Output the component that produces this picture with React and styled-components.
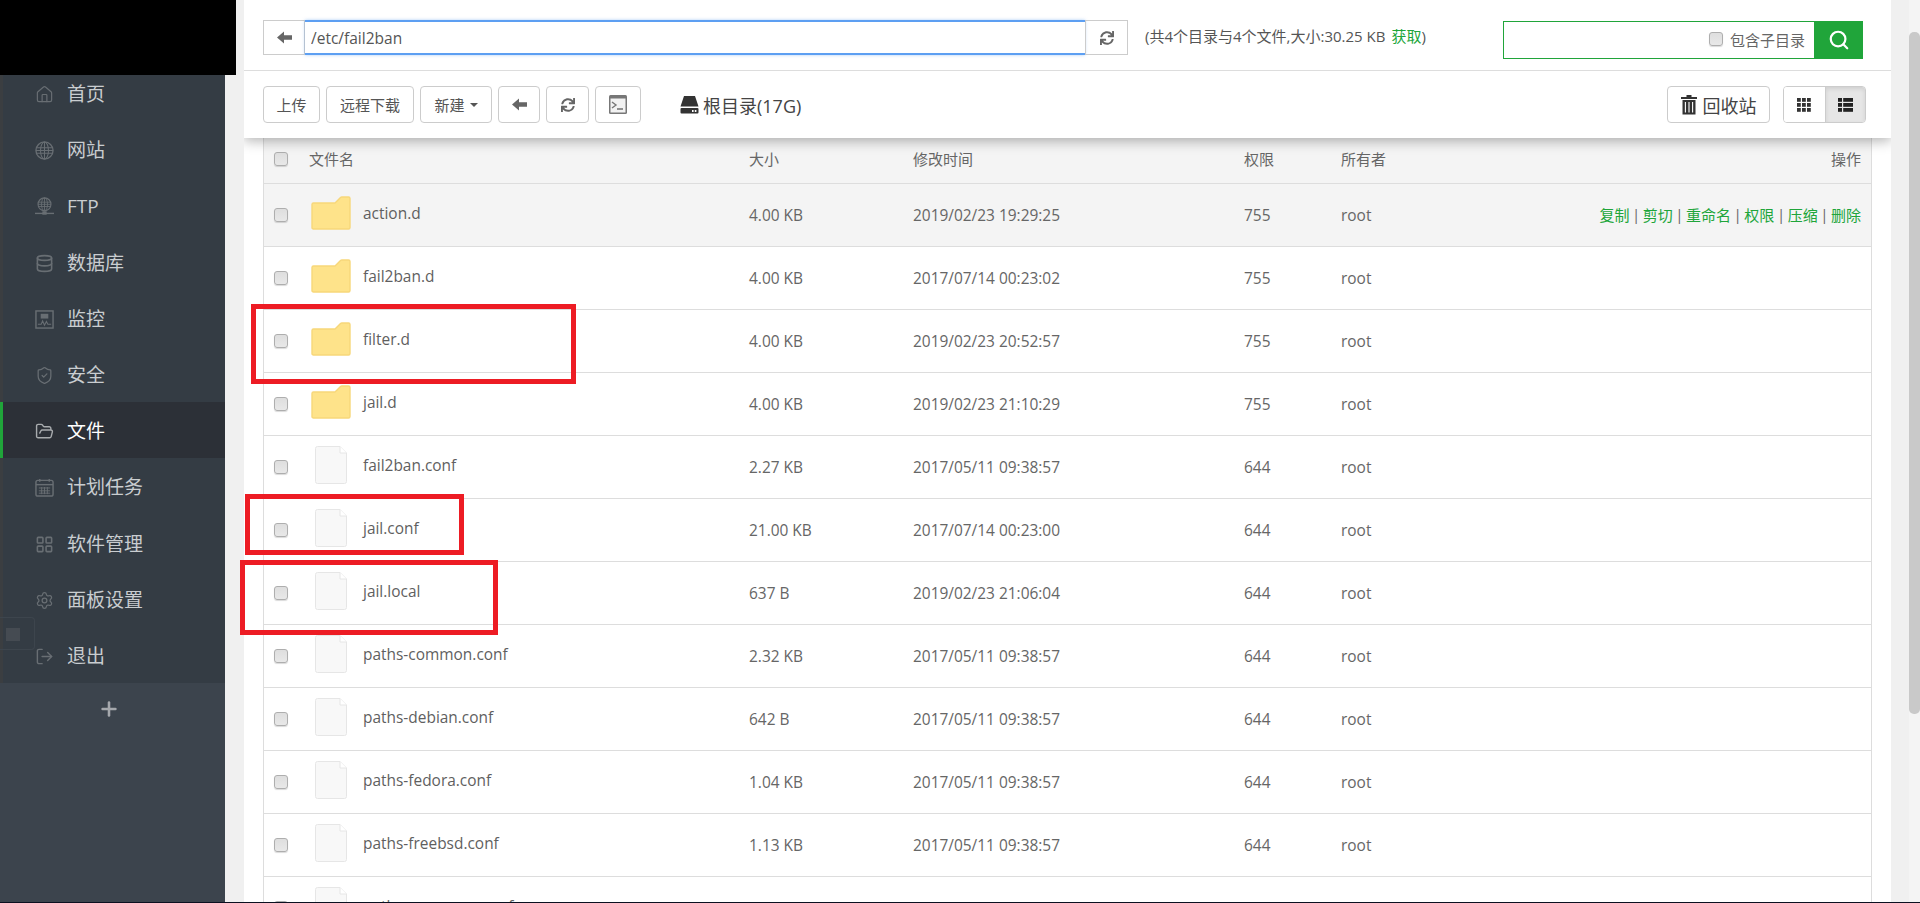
import React from 'react';
import styled, { createGlobalStyle } from 'styled-components';
import { FaSync } from 'react-icons/fa';
import {
  House,
  Database,
  ShieldCheck,
  FolderOpen,
  LayoutGrid,
  Settings,
  LogOut,
  Search,
  Plus,
} from 'lucide-react';

const GlobalStyle = createGlobalStyle`
  html, body {
    margin: 0;
    padding: 0;
    height: 100%;
    overflow: hidden;
    background: #f0f0f0;
  }
  * {
    box-sizing: border-box;
  }
  body {
    font-family: "Open Sans", "Noto Sans CJK SC", sans-serif;
    color: #666;
  }
`;

const Page = styled.div`
  display: flex;
  flex-direction: column;
  height: 100vh;
  overflow: hidden;
`;

const Body = styled.div`
  position: relative;
  display: flex;
  flex: 1;
  min-height: 0;
`;

const BottomLine = styled.div`
  height: 1px;
  background: #0b1020;
`;

const LogoMask = styled.div`
  position: absolute;
  left: 0;
  top: 0;
  width: 236px;
  height: 75px;
  background: #000;
  z-index: 5;
`;

const Sidebar = styled.aside`
  position: relative;
  width: 225px;
  flex: none;
  padding-top: 65px;
  background: #3c444d;
`;

const Menu = styled.nav`
  background: #343c44;
`;

const MenuItem = styled.div`
  display: flex;
  align-items: center;
  gap: 13px;
  height: 56.2px;
  padding-left: 32px;
  padding-top: 3px;
  border-left: 3px solid ${(p) => (p.$active ? '#20a53a' : '#3b3e41')};
  background: ${(p) => (p.$active ? '#2c3037' : 'transparent')};
  color: ${(p) => (p.$active ? '#fff' : '#c9cdd0')};
  font-size: 19px;
  line-height: 1;

  svg {
    flex: none;
    width: 19px;
    height: 19px;
    color: ${(p) => (p.$active ? '#a8abae' : '#686e73')};
  }
`;

const AddMenu = styled.div`
  display: flex;
  justify-content: center;
  margin-top: 15px;
  padding-right: 7px;
  color: #a5a8ac;

  svg {
    width: 22px;
    height: 22px;
  }
`;

const GhostHandle = styled.div`
  position: absolute;
  left: 0;
  top: 617px;
  width: 35px;
  height: 33px;
  border: 1px solid #3d454d;
  border-left: 0;
  border-radius: 0 4px 4px 0;

  &::after {
    content: '';
    position: absolute;
    left: 6px;
    top: 10px;
    width: 14px;
    height: 13px;
    background: #454b52;
  }
`;

const Main = styled.main`
  display: flex;
  flex: 1;
  min-width: 0;
  padding-left: 19px;
`;

const Content = styled.div`
  display: flex;
  flex-direction: column;
  width: 1647px;
  flex: none;
  background: #fff;
  overflow: hidden;
`;

const ScrollTrack = styled.div`
  margin-left: auto;
  width: 11px;
  flex: none;
  padding-top: 32px;
  background: #f4f4f4;
`;

const ScrollThumb = styled.div`
  height: 682px;
  background: #c9c9c9;
  border-radius: 5px;
`;

const Toolbar = styled.div`
  position: relative;
  z-index: 2;
  flex: none;
  background: #fff;
  box-shadow: 0 3px 12px rgba(0, 0, 0, 0.3);
`;

const PathRow = styled.div`
  display: flex;
  align-items: flex-start;
  height: 71px;
  padding: 20px 28px 0 19px;
  border-bottom: 1px solid #ddd;
`;

const PathButton = styled.div`
  display: flex;
  align-items: center;
  justify-content: center;
  flex: none;
  width: ${(p) => p.$width}px;
  height: 35px;
  border: 1px solid #ccc;
  color: #666;
`;

const PathInput = styled.input`
  flex: none;
  width: 780px;
  height: 35px;
  padding: 0 6px;
  border: 0;
  border-top: 2px solid #5d9ff2;
  border-bottom: 2px solid #5d9ff2;
  outline: none;
  font: 15.5px "Open Sans", "Noto Sans CJK SC", sans-serif;
  color: #555;
  box-shadow: 0 0 3px rgba(93, 159, 242, 0.5);
`;

const PathInfo = styled.div`
  margin-left: 17px;
  height: 35px;
  line-height: 33px;
  font-size: 15px;
  color: #555;
  white-space: nowrap;
`;

const GreenText = styled.span`
  margin-left: 6px;
  color: #20a53a;
`;

const SearchBox = styled.div`
  display: flex;
  align-items: center;
  justify-content: flex-end;
  width: 360px;
  height: 38px;
  margin-left: auto;
  margin-top: 1px;
  border: 1px solid #20a53a;
  font-size: 15px;
  color: #666;
`;

const SearchLabel = styled.label`
  display: flex;
  align-items: center;
  gap: 7px;
  margin-right: 9px;
  padding-bottom: 2px;
`;

const SearchButton = styled.div`
  display: flex;
  align-items: center;
  justify-content: center;
  width: 49px;
  height: 38px;
  margin-right: -1px;
  background: #20a53a;
  color: #fff;
`;

const ActionRow = styled.div`
  display: flex;
  align-items: flex-start;
  gap: 6px;
  height: 67px;
  padding: 15px 25px 0 19px;
`;

const ToolButton = styled.div`
  display: flex;
  align-items: center;
  justify-content: center;
  flex: none;
  gap: 5px;
  min-width: ${(p) => p.$width || 0}px;
  height: 37px;
  padding: 0 ${(p) => (p.$width ? 0 : 12.5)}px;
  border: 1px solid #ccc;
  border-radius: 4px;
  background: #fff;
  font-size: 15px;
  color: #555;
  white-space: nowrap;
`;

const Caret = styled.span`
  width: 0;
  height: 0;
  border-top: 4px solid #555;
  border-left: 4px solid transparent;
  border-right: 4px solid transparent;
`;

const DiskLabel = styled.div`
  display: flex;
  align-items: center;
  gap: 4px;
  margin-left: 33px;
  height: 37px;
  font-size: 18px;
  color: #444;
`;

const RecycleButton = styled(ToolButton)`
  gap: 6px;
  margin-left: auto;
  font-size: 18px;
  color: #444;
`;

const ViewGroup = styled.div`
  display: flex;
  flex: none;
  margin-left: 7px;
  height: 37px;
  border: 1px solid #ccc;
  border-radius: 4px;
  overflow: hidden;
`;

const ViewButton = styled.div`
  display: flex;
  align-items: center;
  justify-content: center;
  width: 40.5px;
  background: ${(p) => (p.$active ? '#e6e6e6' : '#fff')};
  border-left: ${(p) => (p.$active ? '1px solid #ccc' : '0')};
  box-shadow: ${(p) => (p.$active ? 'inset 0 2px 4px rgba(0, 0, 0, 0.1)' : 'none')};
  color: #333;
`;

const TableWrap = styled.div`
  flex: 1;
  min-height: 0;
  margin: 0 19px;
  border-left: 1px solid #ddd;
  border-right: 1px solid #ddd;
`;

const Row = styled.div`
  display: grid;
  grid-template-columns: 45px 440px 164px 331px 97px 1fr auto;
  align-items: center;
  height: ${(p) => (p.$head ? 46 : 63)}px;
  padding-right: 10px;
  padding-bottom: ${(p) => (p.$head ? 4 : 1)}px;
  border-bottom: 1px solid #ddd;
  background: ${(p) => (p.$shade ? '#f4f4f4' : '#fff')};
  font-size: ${(p) => (p.$head ? 15 : 15.45)}px;
  color: #666;
  white-space: nowrap;
`;

const CheckCell = styled.div`
  display: flex;
  padding-left: 10px;
`;

const Check = styled.input.attrs({ type: 'checkbox' })`
  appearance: none;
  display: block;
  flex: none;
  width: 14px;
  height: 14px;
  margin: 0;
  border: 1px solid #aeaeae;
  border-radius: 3px;
  background: linear-gradient(#dedede, #e8e8e8);
  box-shadow: 0 1px 1px rgba(0, 0, 0, 0.15);
`;

const NameCell = styled.div`
  display: flex;
  align-items: center;
  gap: 12px;
  padding-left: 2px;
  padding-bottom: 3px;
  color: #5f5f5f;
`;

const IconSlot = styled.div`
  display: flex;
  justify-content: center;
  width: 40px;
`;

const Actions = styled.div`
  display: flex;
  font-size: 15px;
  color: #20a53a;
`;

const Pipe = styled.span`
  width: 13.3px;
  text-align: center;
  color: #666;
`;

const Mark = styled.div`
  position: absolute;
  left: ${(p) => p.$x}px;
  top: ${(p) => p.$y}px;
  width: ${(p) => p.$w}px;
  height: ${(p) => p.$h}px;
  border: 5px solid #ed1c24;
  z-index: 3;
  pointer-events: none;
`;

const ArrowLeft = ({ color = '#666' }) => (
  <svg width="15" height="13" viewBox="0 0 15 13">
    <path d="M0 6.5L7 0.5V4.2H15V8.8H7V12.5Z" fill={color} />
  </svg>
);

const Globe = () => (
  <svg viewBox="0 0 20 20" fill="none" stroke="currentColor" strokeWidth="1.1">
    <circle cx="10" cy="10" r="9" strokeWidth="1.4" />
    <ellipse cx="10" cy="10" rx="4.2" ry="9" />
    <path d="M10 1V19M1.5 7H18.5M1.5 13H18.5M1 10H19" />
  </svg>
);

const FtpGlobe = () => (
  <svg viewBox="0 0 22 22" fill="none" stroke="currentColor" strokeWidth="1">
    <circle cx="11" cy="8.5" r="7.5" strokeWidth="1.3" />
    <ellipse cx="11" cy="8.5" rx="3.5" ry="7.5" />
    <path d="M11 1V16M4 6H18M4 11H18M3.5 8.5H18.5" />
    <path d="M0 19H22" strokeWidth="1.6" />
    <rect x="8.5" y="16.5" width="5" height="4" fill="currentColor" stroke="none" />
  </svg>
);

const ChartBox = () => (
  <svg viewBox="0 0 20 20" fill="none" stroke="currentColor" strokeWidth="1.5">
    <rect x="1" y="1" width="18" height="18" />
    <rect x="6" y="4" width="8" height="5" fill="currentColor" stroke="none" />
    <path d="M3 15H6.5L8 11.5L10 16L12 12L13.5 15H17" strokeWidth="1.1" />
  </svg>
);

const CalendarIcon = () => (
  <svg viewBox="0 0 20 20" fill="none" stroke="currentColor" strokeWidth="1.5">
    <rect x="1" y="2.5" width="18" height="16.5" rx="2" />
    <path d="M1 7H19" />
    <path d="M5 1V4M15 1V4" />
    <path d="M4 10.5H16M4 13.5H16M4 16H16M7 9.5V17M10 9.5V17M13 9.5V17" strokeWidth="1" />
  </svg>
);

const HddIcon = () => (
  <svg width="19" height="19" viewBox="0 0 19 19">
    <path d="M4 1H15L18.5 11.5H0.5Z" fill="#333" />
    <path d="M1.5 13H17.5Q18.5 13 18.5 14V17.5Q18.5 18.5 17.5 18.5H1.5Q0.5 18.5 0.5 17.5V14Q0.5 13 1.5 13Z" fill="#333" />
    <path d="M12 15H13.6V17H12ZM14.8 15H16.4V17H14.8Z" fill="#fff" />
  </svg>
);

const TerminalIcon = () => (
  <svg width="18" height="19" viewBox="0 0 18 19">
    <rect x="0" y="0" width="18" height="19" rx="1.5" fill="#777" />
    <rect x="1.5" y="3.5" width="15" height="14" fill="#f2f2f2" />
    <path d="M3 7L7 10L3 13" fill="none" stroke="#777" strokeWidth="1.4" />
    <path d="M8 14H14" stroke="#777" strokeWidth="1.6" />
  </svg>
);

const TrashIcon = () => (
  <svg width="16" height="21" viewBox="0 0 16 21">
    <path d="M0 3H5.5V1H10.5V3H16V5H0Z" fill="#333" />
    <path d="M1.5 6H14.5V20.5H1.5Z" fill="#333" />
    <path d="M4.4 8V18.5M8 8V18.5M11.6 8V18.5" stroke="#fff" strokeWidth="1.1" />
  </svg>
);

const GridIcon = () => (
  <svg width="14" height="14" viewBox="0 0 14 14" fill="#333">
    {[0, 5, 10].map((y) =>
      [0, 5, 10].map((x) => <rect key={`${x}-${y}`} x={x} y={y} width="3.8" height="3.8" />)
    )}
  </svg>
);

const ListIcon = () => (
  <svg width="15" height="14" viewBox="0 0 15 14" fill="#222">
    {[0, 5, 10].map((y) => (
      <React.Fragment key={y}>
        <rect x="0" y={y} width="4" height="3.8" />
        <rect x="5.2" y={y} width="9.8" height="3.8" />
      </React.Fragment>
    ))}
  </svg>
);

const FolderIcon = () => (
  <svg width="40" height="34" viewBox="0 0 40 34">
    <path
      d="M1 8.5Q1 7 2.5 7H24L29.5 1.5Q30 1 31 1H37.5Q39 1 39 2.5V31.5Q39 33 37.5 33H2.5Q1 33 1 31.5Z"
      fill="#fee38a"
      stroke="#f7d77a"
      strokeWidth="1.4"
    />
  </svg>
);

const FileIcon = () => (
  <svg width="32" height="38" viewBox="0 0 32 38">
    <path
      d="M2.5 0.5H25L31.5 7V35.5Q31.5 37.5 29.5 37.5H2.5Q0.5 37.5 0.5 35.5V2.5Q0.5 0.5 2.5 0.5Z"
      fill="#f8f8f8"
      stroke="#e6e6e6"
    />
    <path d="M25 0.5V7H31.5" fill="#fff" stroke="#e6e6e6" />
  </svg>
);

const menu = [
  { label: '首页', icon: <House strokeWidth={1.5} /> },
  { label: '网站', icon: <Globe /> },
  { label: 'FTP', icon: <FtpGlobe /> },
  { label: '数据库', icon: <Database strokeWidth={2} /> },
  { label: '监控', icon: <ChartBox /> },
  { label: '安全', icon: <ShieldCheck strokeWidth={1.6} /> },
  { label: '文件', icon: <FolderOpen strokeWidth={1.8} />, active: true },
  { label: '计划任务', icon: <CalendarIcon /> },
  { label: '软件管理', icon: <LayoutGrid strokeWidth={2} /> },
  { label: '面板设置', icon: <Settings strokeWidth={1.6} /> },
  { label: '退出', icon: <LogOut strokeWidth={1.8} /> },
];

const files = [
  { name: 'action.d', dir: true, size: '4.00 KB', time: '2019/02/23 19:29:25', mode: '755' },
  { name: 'fail2ban.d', dir: true, size: '4.00 KB', time: '2017/07/14 00:23:02', mode: '755' },
  { name: 'filter.d', dir: true, size: '4.00 KB', time: '2019/02/23 20:52:57', mode: '755' },
  { name: 'jail.d', dir: true, size: '4.00 KB', time: '2019/02/23 21:10:29', mode: '755' },
  { name: 'fail2ban.conf', size: '2.27 KB', time: '2017/05/11 09:38:57', mode: '644' },
  { name: 'jail.conf', size: '21.00 KB', time: '2017/07/14 00:23:00', mode: '644' },
  { name: 'jail.local', size: '637 B', time: '2019/02/23 21:06:04', mode: '644' },
  { name: 'paths-common.conf', size: '2.32 KB', time: '2017/05/11 09:38:57', mode: '644' },
  { name: 'paths-debian.conf', size: '642 B', time: '2017/05/11 09:38:57', mode: '644' },
  { name: 'paths-fedora.conf', size: '1.04 KB', time: '2017/05/11 09:38:57', mode: '644' },
  { name: 'paths-freebsd.conf', size: '1.13 KB', time: '2017/05/11 09:38:57', mode: '644' },
  { name: 'paths-opensuse.conf', size: '4.00 KB', time: '2017/05/11 09:38:57', mode: '644' },
];

const ops = ['复制', '剪切', '重命名', '权限', '压缩', '删除'];

const App = () => (
  <Page>
    <GlobalStyle />
    <Body>
      <LogoMask />
      <Sidebar>
        <Menu>
          {menu.map((item) => (
            <MenuItem key={item.label} $active={item.active}>
              {item.icon}
              {item.label}
            </MenuItem>
          ))}
        </Menu>
        <AddMenu>
          <Plus strokeWidth={2.8} />
        </AddMenu>
        <GhostHandle />
      </Sidebar>
      <Main>
        <Content>
          <Toolbar>
            <PathRow>
              <PathButton $width={42}>
                <ArrowLeft />
              </PathButton>
              <PathInput defaultValue="/etc/fail2ban" readOnly />
              <PathButton $width={43}>
                <FaSync size={14} color="#666" />
              </PathButton>
              <PathInfo>
                (共4个目录与4个文件,大小:30.25 KB
                <GreenText>获取</GreenText>)
              </PathInfo>
              <SearchBox>
                <SearchLabel>
                  <Check />
                  包含子目录
                </SearchLabel>
                <SearchButton>
                  <Search size={22} strokeWidth={2.4} />
                </SearchButton>
              </SearchBox>
            </PathRow>
            <ActionRow>
              <ToolButton>上传</ToolButton>
              <ToolButton $width={88}>远程下载</ToolButton>
              <ToolButton $width={72}>
                新建
                <Caret />
              </ToolButton>
              <ToolButton $width={42}>
                <ArrowLeft />
              </ToolButton>
              <ToolButton $width={43}>
                <FaSync size={14} color="#666" />
              </ToolButton>
              <ToolButton $width={46}>
                <TerminalIcon />
              </ToolButton>
              <DiskLabel>
                <HddIcon />
                根目录(17G)
              </DiskLabel>
              <RecycleButton $width={103}>
                <TrashIcon />
                回收站
              </RecycleButton>
              <ViewGroup>
                <ViewButton>
                  <GridIcon />
                </ViewButton>
                <ViewButton $active>
                  <ListIcon />
                </ViewButton>
              </ViewGroup>
            </ActionRow>
          </Toolbar>
          <TableWrap>
            <Row $head $shade>
              <CheckCell>
                <Check />
              </CheckCell>
              <span>文件名</span>
              <span>大小</span>
              <span>修改时间</span>
              <span>权限</span>
              <span>所有者</span>
              <span>操作</span>
            </Row>
            {files.map((file, index) => (
              <Row key={file.name} $shade={index === 0}>
                <CheckCell>
                  <Check />
                </CheckCell>
                <NameCell>
                  <IconSlot>{file.dir ? <FolderIcon /> : <FileIcon />}</IconSlot>
                  {file.name}
                </NameCell>
                <span>{file.size}</span>
                <span>{file.time}</span>
                <span>{file.mode}</span>
                <span>root</span>
                {index === 0 ? (
                  <Actions>
                    {ops.map((op, i) => (
                      <React.Fragment key={op}>
                        {i > 0 && <Pipe>|</Pipe>}
                        {op}
                      </React.Fragment>
                    ))}
                  </Actions>
                ) : (
                  <span />
                )}
              </Row>
            ))}
          </TableWrap>
        </Content>
        <ScrollTrack>
          <ScrollThumb />
        </ScrollTrack>
      </Main>
      <Mark $x={251} $y={304} $w={325} $h={80} />
      <Mark $x={245} $y={494} $w={219} $h={61} />
      <Mark $x={240} $y={560} $w={258} $h={75} />
    </Body>
    <BottomLine />
  </Page>
);

export default App;
